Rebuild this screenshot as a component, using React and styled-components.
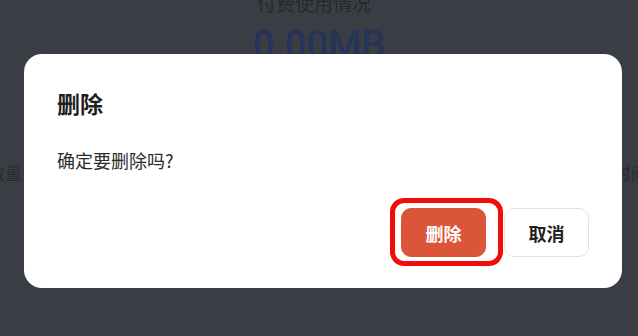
import React from 'react';
import styled, { createGlobalStyle } from 'styled-components';

const GlobalStyle = createGlobalStyle`
    html, body {
        margin: 0;
        padding: 0;
        width: 638px;
        height: 336px;
        overflow: hidden;
    }
    body {
        font-family: "Noto Sans CJK SC", "Noto Sans", sans-serif;
    }
`;

const Page = styled.div`
    width: 638px;
    height: 336px;
    background: #737a86;
    display: flex;
    flex-direction: column;
    align-items: center;
    overflow: hidden;
`;

const UsageLabel = styled.div`
    margin-top: -10px;
    font-size: 19px;
    line-height: 26px;
    color: #41464d;
    margin-left: -10px;
`;

const UsageValue = styled.div`
    margin-top: 7px;
    font-family: Roboto, "Noto Sans", sans-serif;
    font-size: 38px;
    line-height: 44px;
    font-weight: 500;
    color: #4164bd;
`;

const StatRow = styled.div`
    align-self: stretch;
    display: flex;
    justify-content: space-between;
    margin-top: 95px;
    font-size: 17px;
    line-height: 22px;
    color: #4a4f57;
`;

const StatText = styled.span`
    margin-left: ${p => p.$left || 0}px;
    margin-right: ${p => p.$right || 0}px;
`;

const Mask = styled.div`
    position: fixed;
    inset: 0;
    background: rgba(20, 20, 24, 0.6);
    display: flex;
    align-items: flex-start;
    justify-content: flex-start;
    padding: 54px 0 0 24px;
`;

const Dialog = styled.div`
    width: 598px;
    height: 234px;
    box-sizing: border-box;
    background: #fff;
    border-radius: 18px;
    padding: 33px 33px 31px 33px;
    display: flex;
    flex-direction: column;
`;

const Title = styled.h2`
    margin: 0;
    font-size: 23px;
    line-height: 32px;
    font-weight: 700;
    color: #1f1f1f;
`;

const Message = styled.p`
    margin: 28px 0 0 0;
    font-size: 18px;
    line-height: 26px;
    color: #2b2b2b;
`;

const Footer = styled.div`
    margin-top: auto;
    display: flex;
    justify-content: flex-end;
    gap: 18px;
`;

const Highlight = styled.div`
    position: relative;
    display: flex;
`;

const HighlightRing = styled.span`
    position: absolute;
    top: -10px;
    left: -11px;
    right: -17px;
    bottom: -9px;
    border: 5px solid #f20d0d;
    border-radius: 14px;
    pointer-events: none;
`;

const Button = styled.button`
    width: 85px;
    height: 49px;
    box-sizing: border-box;
    border-radius: 10px;
    font-family: "Noto Sans CJK SC", "Noto Sans", sans-serif;
    font-size: 18px;
    font-weight: 700;
    cursor: pointer;
    border: 1px solid ${p => (p.$danger ? '#db5639' : '#dfe2e6')};
    background: ${p => (p.$danger ? '#db5639' : '#fff')};
    color: ${p => (p.$danger ? '#fff' : '#222')};
`;

export default function App() {
    return (
        <>
            <GlobalStyle />
            <Page>
                <UsageLabel>付费使用情况</UsageLabel>
                <UsageValue>0.00MB</UsageValue>
                <StatRow>
                    <StatText $left={-12}>数量</StatText>
                    <StatText $right={-10}>时间</StatText>
                </StatRow>
            </Page>
            <Mask>
                <Dialog>
                    <Title>删除</Title>
                    <Message>确定要删除吗?</Message>
                    <Footer>
                        <Highlight>
                            <Button $danger>删除</Button>
                            <HighlightRing />
                        </Highlight>
                        <Button>取消</Button>
                    </Footer>
                </Dialog>
            </Mask>
        </>
    );
}
